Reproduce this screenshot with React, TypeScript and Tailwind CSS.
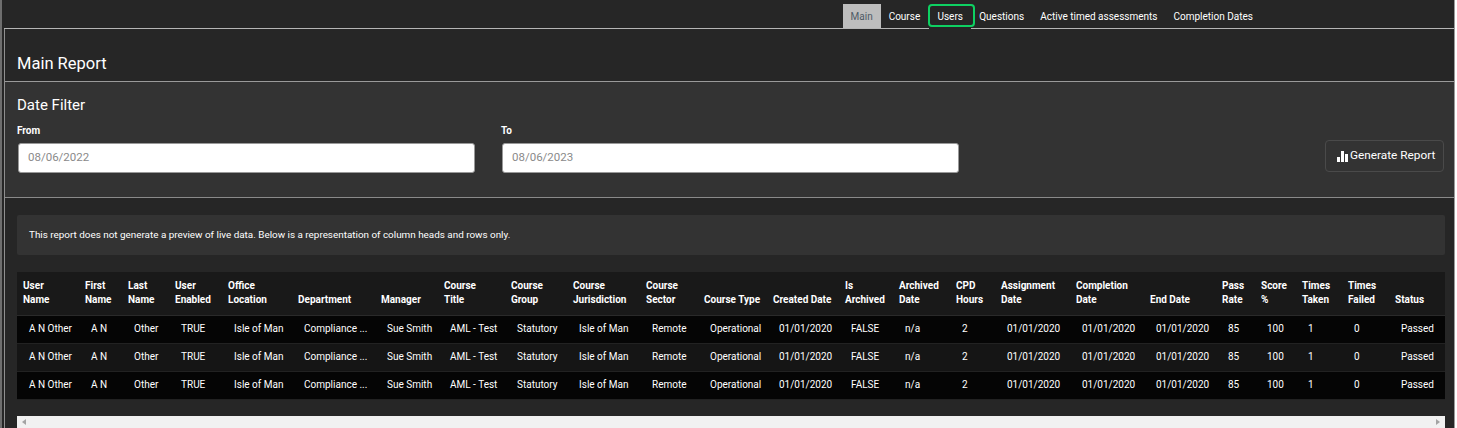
const tabs = [
  { label: "Main", cls: "px-2 w-[38px] bg-[#bdbdbd] text-[#4f5b66]" },
  { label: "Course", cls: "pl-2 pr-2 text-white" },
  { label: "Users", cls: "relative w-[47px] pl-[9px] pr-3 text-white" },
  { label: "Questions", cls: "pl-1 pr-2 text-white" },
  { label: "Active timed assessments", cls: "px-2 text-white" },
  { label: "Completion Dates", cls: "px-2 text-white" },
];

const columns = [
  { head: ["User", "Name"], width: "w-[62px]", value: "A N Other" },
  { head: ["First", "Name"], width: "w-[43px]", value: "A N" },
  { head: ["Last", "Name"], width: "w-[47px]", value: "Other" },
  { head: ["User", "Enabled"], width: "w-[53px]", value: "TRUE" },
  { head: ["Office", "Location"], width: "w-[70px]", value: "Isle of Man" },
  { head: ["Department"], width: "w-[83px]", value: "Compliance ..." },
  { head: ["Manager"], width: "w-[63px]", value: "Sue Smith" },
  { head: ["Course", "Title"], width: "w-[67px]", value: "AML - Test" },
  { head: ["Course", "Group"], width: "w-[62px]", value: "Statutory" },
  { head: ["Course", "Jurisdiction"], width: "w-[73px]", value: "Isle of Man" },
  { head: ["Course", "Sector"], width: "w-[58px]", value: "Remote" },
  { head: ["Course Type"], width: "w-[69px]", value: "Operational" },
  { head: ["Created Date"], width: "w-[72px]", value: "01/01/2020" },
  { head: ["Is", "Archived"], width: "w-[54px]", value: "FALSE" },
  { head: ["Archived", "Date"], width: "w-[57px]", value: "n/a" },
  { head: ["CPD", "Hours"], width: "w-[45px]", value: "2" },
  { head: ["Assignment", "Date"], width: "w-[75px]", value: "01/01/2020" },
  { head: ["Completion", "Date"], width: "w-[74px]", value: "01/01/2020" },
  { head: ["End Date"], width: "w-[72px]", value: "01/01/2020" },
  { head: ["Pass", "Rate"], width: "w-[39px]", value: "85" },
  { head: ["Score", "%"], width: "w-[41px]", value: "100" },
  { head: ["Times", "Taken"], width: "w-[46px]", value: "1" },
  { head: ["Times", "Failed"], width: "w-[47px]", value: "0" },
  { head: ["Status"], width: "w-[56px]", value: "Passed" },
];

const rows = ["bg-[#050505]", "bg-[#151515]", "bg-[#050505]"];

function DateField({ label, value }: { label: string; value: string }) {
  return (
    <div className="w-[484px]">
      <label className="block text-[10px] font-bold leading-[13px] text-white">{label}</label>
      <div className="mt-[6px] ml-px flex h-[30px] w-[457px] items-center rounded-[3px] border border-[#999] bg-white pl-[9px] text-[11.5px] text-[#8a8a8a]">
        {value}
      </div>
    </div>
  );
}

export default function App() {
  return (
    <div className="mr-[2px] box-border h-[428px] overflow-hidden border-l-2 border-r border-l-[#6e6e6e] border-r-[#9a9a9a] bg-[#262626] font-['Roboto',sans-serif] text-white">
      {/* Tabs */}
      <div className="ml-[2px] box-border flex h-[29px] items-end justify-end border-b border-[#b5b5b5] pr-[193px] pt-1">
        {tabs.map((tab) => (
          <div
            key={tab.label}
            className={`flex h-[24px] items-center justify-center whitespace-nowrap text-[10px] ${tab.cls}`}
          >
            {tab.label}
            {tab.label === "Users" && (
              <>
                <span className="absolute left-0 top-0 h-[23px] w-[47px] rounded-[4px] border-2 border-[#0ed162]" />
                <span className="absolute left-px top-[24px] h-px w-[42px] bg-[#262626]" />
              </>
            )}
          </div>
        ))}
      </div>

      <div className="ml-[2px] border-l border-[#8f8f8f]">
        {/* Title */}
        <div className="flex h-[53px] items-center border-b border-[#9a9a9a] pl-3 pt-[17px]">
          <h1 className="text-[16.5px] leading-5">Main Report</h1>
        </div>

        {/* Date filter */}
        <div className="flex h-[116px] border-b border-[#8a8a8a] bg-[#333333] pl-3 pr-[10px]">
          <div className="flex-1 pt-[14px]">
            <h2 className="text-[15px] leading-[18px]">Date Filter</h2>
            <div className="mt-[10px] flex">
              <DateField label="From" value="08/06/2022" />
              <DateField label="To" value="08/06/2023" />
            </div>
          </div>
          <div className="pt-[58px]">
            <button className="flex h-[32px] w-[119px] items-center gap-[2px] rounded-[4px] border border-[#4a4a4a] pl-[11px] text-[11.8px] text-white">
              <svg viewBox="0 0 11 11" className="h-[11px] w-[11px] fill-white">
                <rect x="0" y="6" width="3" height="5" />
                <rect x="4" y="0" width="3" height="11" />
                <rect x="8" y="3" width="3" height="8" />
              </svg>
              Generate Report
            </button>
          </div>
        </div>

        {/* Preview */}
        <div className="pl-3 pr-[9px] pt-[17px]">
          <div className="flex h-[40px] items-center rounded-[2px] bg-[#333333] pl-3 text-[9.9px]">
            This report does not generate a preview of live data. Below is a representation of column heads and rows only.
          </div>

          <table className="mt-[17px] w-[1428px] table-fixed border-collapse text-[10px]">
            <colgroup>
              {columns.map((col) => (
                <col key={col.head.join(" ")} className={col.width} />
              ))}
            </colgroup>
            <thead>
              <tr className="h-[43px] border-b border-[#2a2a2a] bg-[#191919]">
                {columns.map((col) => (
                  <th key={col.head.join(" ")} className="px-[6px] pb-[8px] pt-[6px] text-left align-bottom font-bold leading-[14px]">
                    {col.head.map((line) => (
                      <div key={line} className="whitespace-nowrap">{line}</div>
                    ))}
                  </th>
                ))}
              </tr>
            </thead>
            <tbody>
              {rows.map((bg, i) => (
                <tr key={i} className={`h-[28px] ${bg} border-b border-[#222]`}>
                  {columns.map((col) => (
                    <td key={col.head.join(" ")} className="overflow-hidden whitespace-nowrap pb-[2px] pl-3 text-left">
                      {col.value}
                    </td>
                  ))}
                </tr>
              ))}
            </tbody>
          </table>

          {/* Horizontal scrollbar */}
          <div className="mt-[16px] flex h-[13px] w-[1428px] items-center justify-between bg-[#f1f1f1] px-[5px] text-[#a3a3a3]">
            <span className="h-0 w-0 border-y-[3px] border-r-[4px] border-y-transparent border-r-[#a3a3a3]" />
            <span className="h-0 w-0 border-y-[3px] border-l-[4px] border-y-transparent border-l-[#a3a3a3]" />
          </div>
        </div>
      </div>
    </div>
  );
}
